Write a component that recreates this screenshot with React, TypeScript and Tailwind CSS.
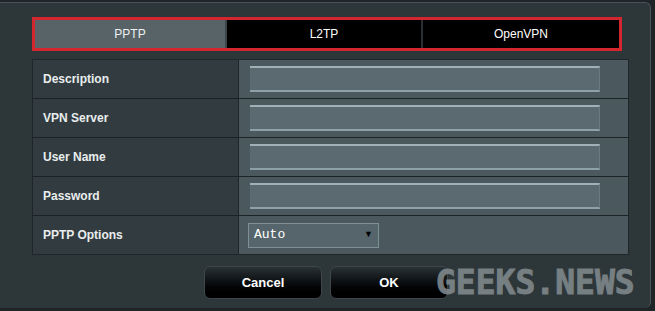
import React from "react";

const rows = ["Description", "VPN Server", "User Name", "Password"];

function TextInput() {
  return (
    <div className="w-[350px] h-[26px] bg-[#5b6a70] border-t-2 border-b-2 border-t-[#9fb0b7] border-b-[#8fa1a8] border-r border-r-[#6a7a80]" />
  );
}

export default function App() {
  return (
    <div className="w-[655px] h-[311px] bg-[#1e2427] overflow-hidden" style={{ fontFamily: '"Liberation Sans", Arial, sans-serif' }}>
      <div className="w-[651px] h-[306px] mt-[2px] bg-[#2d3639] border-t border-t-[#4a5458] border-r border-r-[#4a5458] rounded-tr-[6px] rounded-br-[6px] flex flex-col pl-[32px] pt-[14px]">
        {/* tabs */}
        <div className="w-[590px] h-[34px] border-[3px] border-[#d3262f] flex">
          <div className="w-[192px] h-full bg-[#586367] flex items-center justify-center text-[12px] text-[#eef1f2] border-r-2 border-r-[#3c4548]">PPTP</div>
          <div className="w-[196px] h-full bg-black flex items-center justify-center text-[12px] text-white border-r-2 border-r-[#2a2f31]">L2TP</div>
          <div className="flex-1 h-full bg-black flex items-center justify-center text-[12px] text-white">OpenVPN</div>
        </div>
        {/* table */}
        <div className="mt-[8px] w-[597px] border border-[#1f2629] flex flex-col">
          {rows.map((r) => (
            <div key={r} className="flex h-[39px] border-b border-b-[#1c2326]">
              <div className="w-[206px] bg-[#323c40] border-r border-r-[#1f2629] flex items-center pl-[10px] text-[12px] font-bold text-[#e9edee]">{r}</div>
              <div className="flex-1 bg-[#4b585e] flex items-center pl-[11px]">
                <TextInput />
              </div>
            </div>
          ))}
          <div className="flex h-[38px]">
            <div className="w-[206px] bg-[#323c40] border-r border-r-[#1f2629] flex items-center pl-[10px] text-[12px] font-bold text-[#e9edee]">PPTP Options</div>
            <div className="flex-1 bg-[#4b585e] flex items-center pl-[9px]">
              <div className="w-[131px] h-[25px] bg-[#56656b] border border-[#7e8f95] flex items-center justify-between pl-[5px] pr-[5px]">
                <span className="text-[13px] text-white" style={{ fontFamily: '"Liberation Mono", "Courier New", monospace' }}>Auto</span>
                <span className="text-[9px] text-black">▼</span>
              </div>
            </div>
          </div>
        </div>
        {/* buttons */}
        <div className="flex items-center mt-[11px]">
          <div className="ml-[172px] w-[118px] h-[33px] rounded-[6px] border border-[#3e4649] bg-gradient-to-b from-[#2a3236] via-[#0b0e10] to-[#000000] flex items-center justify-center text-white font-bold text-[13px]">Cancel</div>
          <div className="ml-[8px] w-[118px] h-[33px] rounded-[6px] border border-[#3e4649] bg-gradient-to-b from-[#2a3236] via-[#0b0e10] to-[#000000] flex items-center justify-center text-white font-bold text-[13px]">OK</div>
          <div className="-ml-[12px] text-[33px] leading-none font-bold text-[#7f878b] opacity-90" style={{ fontFamily: '"DejaVu Sans Mono", monospace', WebkitTextStroke: "1px #7f878b" }}>GEEKS.NEWS</div>
        </div>
      </div>
    </div>
  );
}
